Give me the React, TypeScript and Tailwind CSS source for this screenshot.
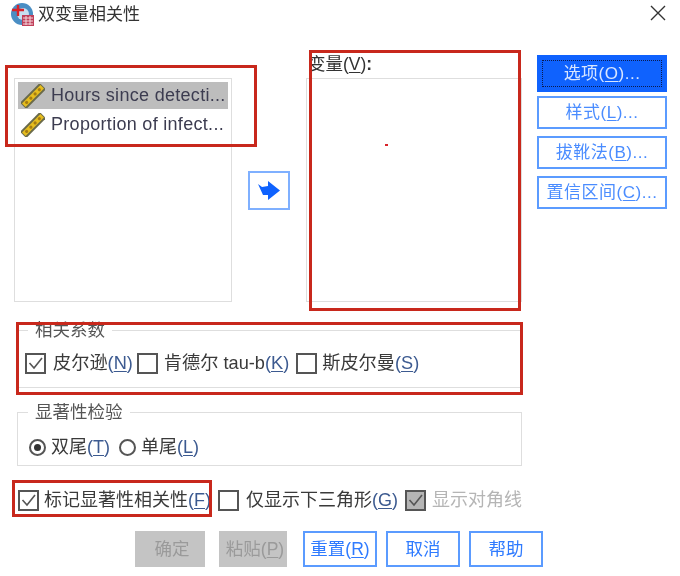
import React from "react";

const FONT = '"Liberation Sans", "Noto Sans CJK SC", sans-serif';

function Ruler() {
  return (
    <svg width="24" height="24" viewBox="0 0 24 24" className="shrink-0">
      <g transform="rotate(-45 12 12)">
        <rect x="-2" y="7.5" width="28" height="9" rx="1" fill="#6a6a4a" />
        <rect x="-1" y="9.5" width="26" height="5" fill="#e6bd1e" />
        <circle cx="3" cy="12" r="1.6" fill="#a67c10" />
        <circle cx="9" cy="12" r="1.6" fill="#a67c10" />
        <circle cx="15" cy="12" r="1.6" fill="#a67c10" />
        <circle cx="21" cy="12" r="1.6" fill="#a67c10" />
      </g>
    </svg>
  );
}

function Check({ checked, muted }: { checked?: boolean; muted?: boolean }) {
  return (
    <span className={`w-[21px] h-[21px] shrink-0 border-2 border-[#555] flex items-center justify-center ${muted ? "bg-[#b5b5b5]" : "bg-white"}`}>
      {checked && (
        <svg width="17" height="17" viewBox="0 0 17 17">
          <path d="M2.5 8l4.5 5 8-10" fill="none" stroke="#555" strokeWidth="1.6" />
        </svg>
      )}
    </span>
  );
}

function SideBtn({ children, h, primary }: { children: React.ReactNode; h: string; primary?: boolean }) {
  return (
    <div className={`${h} w-[130px] flex items-center justify-center text-[17px] whitespace-nowrap ${primary ? "bg-[#0f62fe] text-[#d8e6ff] p-[5px]" : "bg-white border-2 border-[#5b9bff] text-[#4a8cff]"}`}>
      {primary ? (
        <span className="w-full h-full border border-dotted border-[#0a1a50] flex items-center justify-center tracking-[0.5px]">{children}</span>
      ) : (
        <span className="tracking-[0.5px]">{children}</span>
      )}
    </div>
  );
}

function U({ children }: { children: React.ReactNode }) {
  return <span className="underline underline-offset-2">{children}</span>;
}

function BottomBtn({ children, w, disabled }: { children: React.ReactNode; w: string; disabled?: boolean }) {
  return (
    <div className={`${w} h-[36px] flex items-center justify-center text-[17.5px] whitespace-nowrap ${disabled ? "bg-[#c4c4c4] text-[#9a9a9a] pl-[4px]" : "bg-white border-2 border-[#5b9bff] text-[#2f7bff]"}`}>
      {children}
    </div>
  );
}

function Group({ title, h, children }: { title: string; h: string; children: React.ReactNode }) {
  return (
    <fieldset className={`${h} w-[505px] ml-[17px] border border-[#dedede]`}>
      <legend className="ml-[10px] px-[7px] text-[17.5px] leading-[18px] text-[#555]">{title}</legend>
      {children}
    </fieldset>
  );
}

const redBox = "absolute border-[3px] border-[#c8281c] pointer-events-none";

export default function App() {
  return (
    <div className="relative w-[680px] h-[576px] bg-white overflow-hidden text-[#3a3a3a] blur-[0.4px]" style={{ fontFamily: FONT }}>
      {/* title bar */}
      <div className="h-[28px] flex items-center pl-[11px] pr-[14px]">
        <svg width="23" height="23" viewBox="0 0 23 23" className="shrink-0">
          <circle cx="11" cy="11" r="11" fill="#4a8ec4" />
          <circle cx="12" cy="11" r="6" fill="#c8dff0" />
          <rect x="11" y="12" width="12" height="11" fill="#c0405a" />
          <path d="M12 15h10M12 18h10M12 21h10M15 13v9M19 13v9" stroke="#f3d6dc" strokeWidth="1" />
          <path d="M1 7h12M7 2v11" stroke="#d8232a" strokeWidth="2.4" />
        </svg>
        <span className="ml-[4px] mt-[2px] text-[17px] text-[#333]">双变量相关性</span>
        <svg width="16" height="16" viewBox="0 0 16 16" className="ml-auto mt-[-2px]">
          <path d="M1 1l14 14M15 1L1 15" stroke="#333" strokeWidth="1.4" />
        </svg>
      </div>

      {/* main row */}
      <div className="flex mt-[27px] h-[247px]">
        <div className="w-[218px] h-[224px] ml-[14px] mt-[23px] border border-[#dedede] p-[3px]">
          <div className="h-[27px] bg-[#bdbdbd] flex items-center gap-[6px] pl-[3px] text-[18px] text-[#3c3c50] tracking-[0.3px] whitespace-nowrap overflow-hidden">
            <Ruler />
            <span>Hours since detecti...</span>
          </div>
          <div className="h-[27px] mt-[2px] flex items-center gap-[6px] pl-[3px] text-[18px] text-[#3c3c50] tracking-[0.3px] whitespace-nowrap overflow-hidden">
            <Ruler />
            <span>Proportion of infect...</span>
          </div>
        </div>

        <div className="w-[42px] h-[39px] ml-[16px] mt-[116px] border-2 border-[#7fb0ff] flex items-center justify-center bg-white">
          <svg width="22" height="19" viewBox="0 0 22 19">
            <path d="M0 3 L4 6 L10 5 L10 0 L22 9.5 L10 19 L10 14 L5 14 Z" fill="#0f62fe" />
          </svg>
        </div>

        <div className="w-[216px] ml-[16px]">
          <div className="h-[23px] pl-[2px] text-[17.5px] leading-[18px] text-[#333] whitespace-nowrap">
            变量(<U>V</U>)<b>:</b>
          </div>
          <div className="h-[224px] border border-[#dedede]" />
        </div>

        <div className="ml-[15px] w-[130px] flex flex-col">
          <SideBtn h="h-[37px]" primary>选项(<U>O</U>)...</SideBtn>
          <div className="mt-[4px]"><SideBtn h="h-[33px]">样式(<U>L</U>)...</SideBtn></div>
          <div className="mt-[7px]"><SideBtn h="h-[33px]">拔靴法(<U>B</U>)...</SideBtn></div>
          <div className="mt-[7px]"><SideBtn h="h-[33px]">置信区间(<U>C</U>)...</SideBtn></div>
        </div>
      </div>

      {/* correlation coefficients */}
      <div className="mt-[19px]">
        <Group title="相关系数" h="h-[67px]">
          <div className="flex items-center pl-[7px] pt-[11px] text-[18.2px] whitespace-nowrap">
            <Check checked />
            <span className="ml-[7px]">皮尔逊<span className="text-[#3c5a90]">(<U>N</U>)</span></span>
            <span className="ml-[4px]"><Check /></span>
            <span className="ml-[6px]">肯德尔 tau-b<span className="text-[#3c5a90]">(<U>K</U>)</span></span>
            <span className="ml-[7px]"><Check /></span>
            <span className="ml-[5px]">斯皮尔曼<span className="text-[#3c5a90]">(<U>S</U>)</span></span>
          </div>
        </Group>
      </div>

      {/* significance */}
      <div className="mt-[15px]">
        <Group title="显著性检验" h="h-[63px]">
          <div className="flex items-center pl-[11px] pt-[13px] text-[18px] whitespace-nowrap">
            <span className="w-[17px] h-[17px] rounded-full border-2 border-[#555] flex items-center justify-center">
              <span className="w-[7px] h-[7px] rounded-full bg-[#333]" />
            </span>
            <span className="ml-[5px]">双尾<span className="text-[#3c5a90]">(<U>T</U>)</span></span>
            <span className="ml-[9px] w-[17px] h-[17px] rounded-full border-2 border-[#555]" />
            <span className="ml-[5px]">单尾<span className="text-[#3c5a90]">(<U>L</U>)</span></span>
          </div>
        </Group>
      </div>

      {/* check row */}
      <div className="flex items-center mt-[21px] pl-[18px] text-[18px] whitespace-nowrap">
        <Check checked />
        <span className="ml-[5px]">标记显著性相关性<span className="text-[#3c5a90]">(<U>F</U>)</span></span>
        <span className="ml-[7px]"><Check /></span>
        <span className="ml-[7px]">仅显示下三角形<span className="text-[#3c5a90]">(<U>G</U>)</span></span>
        <span className="ml-[7px]"><Check checked muted /></span>
        <span className="ml-[6px] text-[#b5b5b5]">显示对角线</span>
      </div>

      {/* bottom buttons */}
      <div className="flex mt-[17px] pl-[135px]">
        <BottomBtn w="w-[70px]" disabled>确定</BottomBtn>
        <div className="ml-[14px]"><BottomBtn w="w-[68px]" disabled>粘贴(<U>P</U>)</BottomBtn></div>
        <div className="ml-[16px]"><BottomBtn w="w-[74px]">重置(<U>R</U>)</BottomBtn></div>
        <div className="ml-[9px]"><BottomBtn w="w-[74px]">取消</BottomBtn></div>
        <div className="ml-[9px]"><BottomBtn w="w-[74px]">帮助</BottomBtn></div>
      </div>

      {/* red annotation overlays */}
      <div className={`${redBox} left-[5px] top-[65px] w-[252px] h-[82px]`} />
      <div className={`${redBox} left-[309px] top-[50px] w-[212px] h-[261px]`} />
      <div className={`${redBox} left-[16px] top-[322px] w-[507px] h-[73px]`} />
      <div className={`${redBox} left-[12px] top-[480px] w-[200px] h-[37px]`} />
      <div className="absolute left-[385px] top-[144px] w-[3px] h-[2px] bg-[#d8232a]" />
    </div>
  );
}
